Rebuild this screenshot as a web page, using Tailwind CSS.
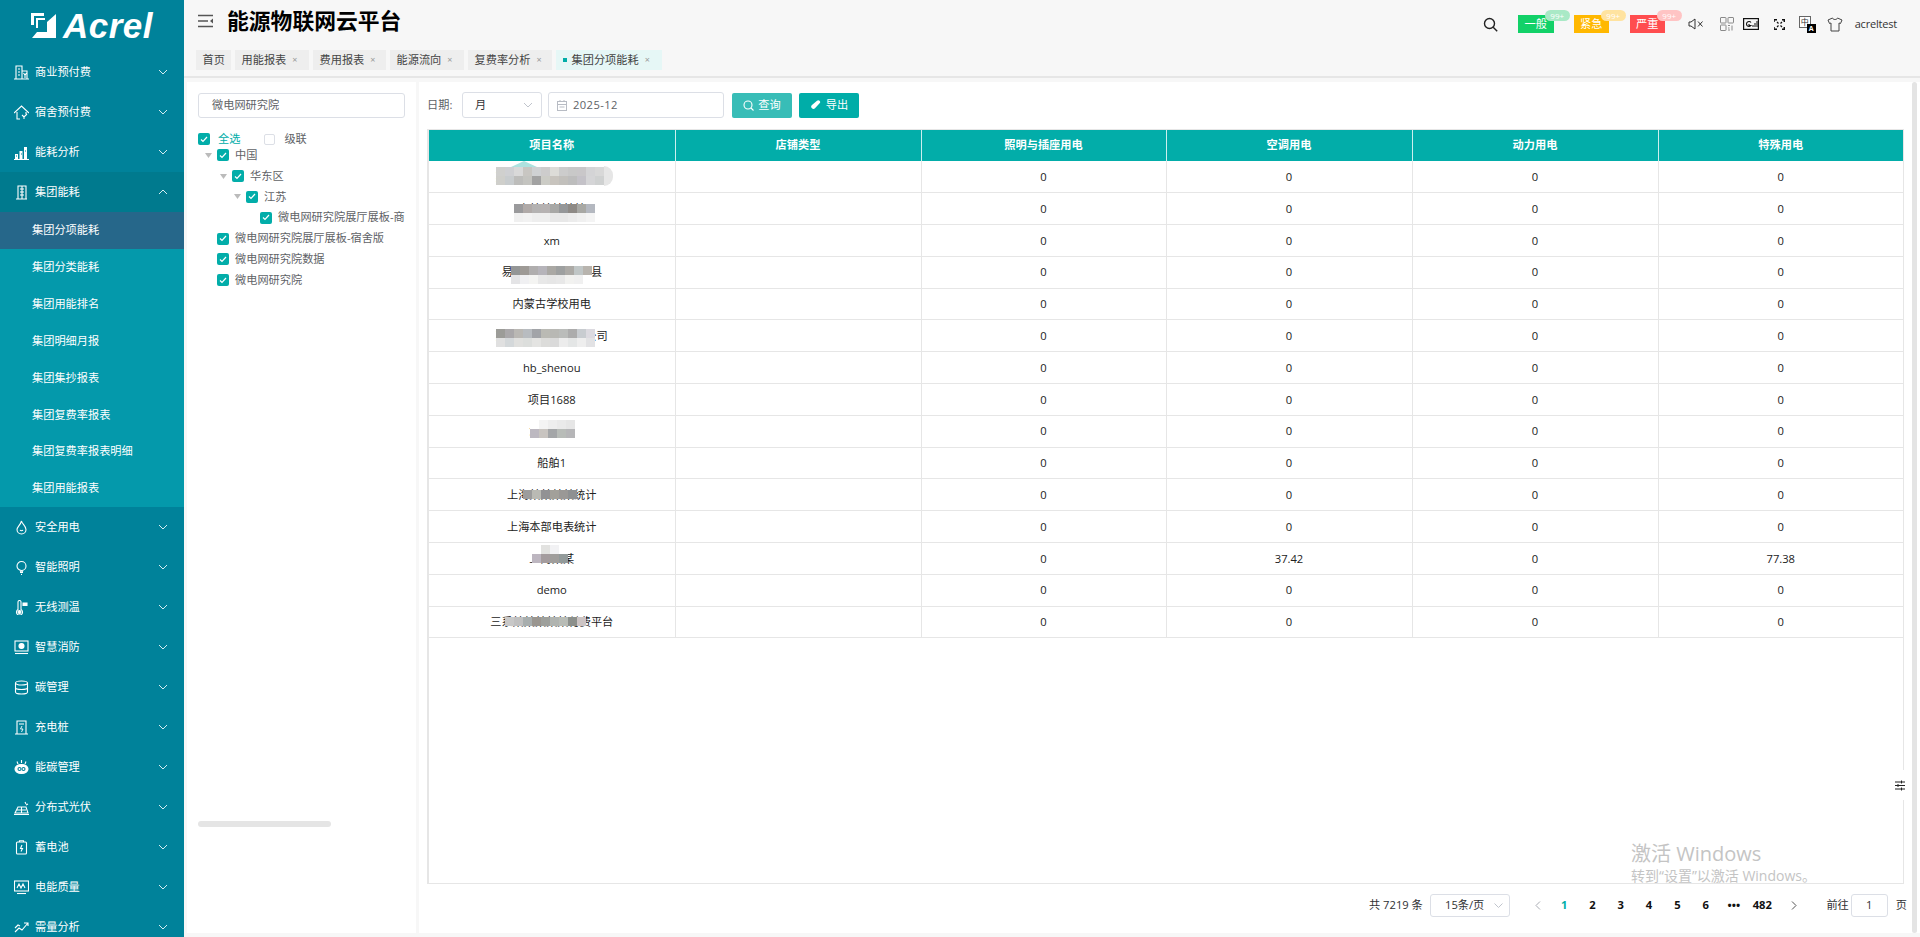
<!DOCTYPE html>
<html lang="zh"><head><meta charset="utf-8"><title>能源物联网云平台</title>
<script src="https://cdn.jsdelivr.net/npm/@tailwindcss/browser@4"></script></head>
<body class="w-[1920px] h-[937px] overflow-hidden flex bg-[#f7f7f7] text-[11.2px] text-[#303133] font-['Open_Sans','Noto_Sans_CJK_SC',sans-serif]">
<aside class="w-[184px] h-[937px] shrink-0 overflow-hidden bg-[#00829a] text-white">
  <div class="h-[52px] flex items-start pt-[12px] pl-[31px] gap-[6px]">
    <svg class="mt-[1px]" width="26" height="25" viewBox="0 0 26 25" fill="#fff"><path d="M0 0h13v3H3v9H0z"/><path d="M5 5h9v2H7v8H5z"/><path d="M25 1v24H1l5-6h10V9z"/></svg>
    <span class="text-[35px] leading-[27px] font-bold italic tracking-[.5px] font-['Liberation_Sans',sans-serif]">Acrel</span>
  </div>
  <nav id="nav"></nav>
</aside>
<div class="flex-1 min-w-0 flex flex-col">
  <header class="h-[78px] shrink-0 border-b-2 border-[#e6e6e6] relative">
    <div class="h-[50px] flex items-center pl-[14px] pr-[23px] pb-[8px]">
      <svg width="15" height="14" viewBox="0 0 15 14" fill="none" stroke="#555" stroke-width="1.3"><path d="M0 1.5h15M0 7h10M0 12.5h15"/><path d="M15 4.5 12 7l3 2.5z" fill="#555" stroke="none"/></svg>
      <h1 class="ml-[14px] text-[21.8px] font-bold text-black leading-none">能源物联网云平台</h1>
      <div class="ml-auto flex items-center h-[24px] mt-[6px]">
        <svg width="15" height="15" viewBox="0 0 15 15" fill="none" stroke="#222" stroke-width="1.4"><circle cx="6.5" cy="6.5" r="5"/><path d="m10.2 10.2 4 4"/></svg>
        <div class="relative ml-[20px] w-[36px] h-[18px] bg-[#12d168] text-white text-[11.2px] flex items-center justify-center">一般<span class="absolute left-[27px] top-[-5px] w-[25px] h-[11px] rounded-full bg-[#a9e9c6] text-[8px] leading-[11px] text-center">99+</span></div>
        <div class="relative ml-[20px] w-[35px] h-[18px] bg-[#ffb800] text-white text-[11.2px] flex items-center justify-center">紧急<span class="absolute left-[27px] top-[-5px] w-[25px] h-[11px] rounded-full bg-[#ffe3a0] text-[8px] leading-[11px] text-center">99+</span></div>
        <div class="relative ml-[21px] w-[35px] h-[18px] bg-[#ff4d4f] text-white text-[11.2px] flex items-center justify-center">严重<span class="absolute left-[27px] top-[-5px] w-[25px] h-[11px] rounded-full bg-[#ffc4c4] text-[8px] leading-[11px] text-center">99+</span></div>
        <svg class="ml-[23px]" width="15" height="12" viewBox="0 0 15 12" fill="none" stroke="#333" stroke-width="1"><path d="M1 4v4h2l4 3V1L3 4z"/><path d="m10 3.5 4.500 5M14.500 3.500l-4.500 5"/></svg>
        <svg class="ml-[17px]" width="14" height="14" viewBox="0 0 14 14" fill="none" stroke="#8a8a8a" stroke-width="1"><rect x=".5" y=".5" width="5.500" height="5.500" rx=".5"/><rect x="8" y=".5" width="5.500" height="5.500" rx=".5"/><rect x=".5" y="8" width="5.500" height="5.500" rx=".5"/><path d="M8 8.500h2M8 11h1.500M8 13h2M12 8.500v5" /></svg>
        <svg class="ml-[9px]" width="16" height="12" viewBox="0 0 16 12" fill="none" stroke="#111" stroke-width="1"><rect x=".5" y=".5" width="15" height="11" stroke="#111" stroke-width="1.400"/><path d="M8 4.500A2.500 2.500 0 1 0 8 7.500H6V6" stroke-width="1.100"/><path d="M10 9V7M12 9V5M14 9V3"/></svg>
        <svg class="ml-[15px]" width="11" height="11" viewBox="0 0 11 11" fill="none" stroke="#111" stroke-width="1.500"><path d="M0 3V.7h3M8 .7h2.300V3M0 8v2.300h3M8 10.300h2.300V8"/><path d="m3 3 1.500 1.500M8 3 6.500 4.500M3 8l1.500-1.500M8 8 6.500 6.500" stroke-width="1.200"/></svg>
        <div class="relative ml-[14px] w-[17px] h-[17px]"><div class="absolute left-0 top-0 w-[12px] h-[12px] border border-[#666] bg-white text-[8px] leading-[10px] text-center">中</div><div class="absolute right-0 bottom-0 w-[9px] h-[9px] bg-black text-white text-[7px] leading-[9px] text-center font-bold">A</div></div>
        <svg class="ml-[11px]" width="16" height="15" viewBox="0 0 16 15" fill="none" stroke="#444" stroke-width="1"><path d="M5.500 1 1 3l1.500 3.500L4 6v8h8V6l1.500.5L15 3l-4.500-2c-.5 2-4.500 2-5 0z"/></svg>
        <span class="ml-[12px] text-[11px] tracking-[-.2px] text-[#333]">acreltest</span>
      </div>
    </div>
    <div class="flex gap-[4px] pl-[12px] h-[20px]" id="tabs"></div>
  </header>
  <main class="flex-1 min-h-0 flex mt-[4px] mb-[4px] pl-[3px] gap-[3px]">
    <section class="w-[229px] shrink-0 bg-white px-[11px] pt-[11px] relative">
      <div class="w-[207px] h-[25px] border border-[#dcdfe6] rounded-[3px] pl-[13px] flex items-center text-[#606266]">微电网研究院</div>
      <div class="h-[12px] mt-[15px] flex items-center"><span class="cb"></span><span class="ml-[8px] text-[#00ada8]">全选</span><span class="ml-[24px] w-[11px] h-[11px] border border-[#dcdfe6] rounded-[2px] bg-white"></span><span class="ml-[9px] text-[#606266]">级联</span></div>
      <div id="tree" class="w-[207px] overflow-hidden"></div>
      <div class="absolute left-[11px] top-[739px] w-[133px] h-[6px] rounded-full bg-[#e5e5e5]"></div>
    </section>
    <section class="w-[1493px] shrink-0 bg-white pl-[8px] pt-[10px] relative">
      <div class="h-[26px] flex items-center">
        <span class="w-[35px] text-[#606266]">日期:</span>
        <div class="w-[80px] h-[26px] border border-[#dcdfe6] rounded-[3px] pl-[12px] pr-[8px] flex items-center justify-between"><span>月</span><svg width="10" height="6" viewBox="0 0 10 6" fill="none" stroke="#c0c4cc"><path d="m1 1 4 4 4-4"/></svg></div>
        <div class="ml-[6px] w-[176px] h-[26px] border border-[#dcdfe6] rounded-[3px] pl-[8px] flex items-center"><svg width="10" height="11" viewBox="0 0 10 11" fill="none" stroke="#b8bcc4"><rect x=".5" y="1.500" width="9" height="9"/><path d="M.5 4.500h9M3 0v2M7 0v2M2.500 7h5"/></svg><span class="ml-[6px] tracking-[.4px] text-[#606266]">2025-12</span></div>
        <button class="ml-[8px] w-[60px] h-[25px] rounded-[2px] bg-[#38bdb7] text-white flex items-center justify-center gap-[4px]"><svg width="11" height="11" viewBox="0 0 11 11" fill="none" stroke="#fff" stroke-width="1.100"><circle cx="5" cy="5" r="4"/><path d="m8 8 2.500 2.500"/></svg>查询</button>
        <button class="ml-[7px] w-[60px] h-[25px] rounded-[2px] bg-[#00ada8] text-white flex items-center justify-center gap-[5px]"><svg width="11" height="10" viewBox="0 0 11 10" fill="#fff"><path d="M7 .8a1.800 1.800 0 0 1 2.600 2.500L5 8.200a2.200 2.200 0 0 1-3.300-2.900z"/></svg>导出</button>
      </div>
      <div class="relative mt-[11px] w-[1477px] h-[755px] border border-[#e6e6e6] border-l-2 text-[#222]">
        <table class="w-[1474px] table-fixed border-collapse"><thead><tr class="h-[31px] bg-[#02ada9] text-white font-bold">
          <th class="w-[246px] border-r border-white/80 font-bold">项目名称</th><th class="w-[246px] border-r border-white/80 font-bold">店铺类型</th><th class="w-[245px] border-r border-white/80 font-bold">照明与插座用电</th><th class="w-[246px] border-r border-white/80 font-bold">空调用电</th><th class="w-[246px] border-r border-white/80 font-bold">动力用电</th><th class="font-bold">特殊用电</th></tr></thead><tbody id="rows"></tbody></table>
        <div class="absolute right-[-2px] top-[640px] w-[10px] h-[30px] bg-white flex items-center justify-center"><svg width="10" height="12" viewBox="0 0 10 12" fill="none" stroke="#222"><path d="M0 3h10M0 6.500h10M0 10h10"/><path d="M6.500 1.500v3M3 5v3M6.500 8.500v3"/></svg></div>
      </div>
      <div class="h-[43px] flex items-center text-[11.2px] relative">
        <span class="ml-[942px] w-[61px]">共 7219 条</span>
        <div class="w-[80px] h-[23px] border border-[#dcdfe6] rounded-[3px] pl-[14px] pr-[6px] flex items-center justify-between"><span>15条/页</span><svg width="9" height="5" viewBox="0 0 9 5" fill="none" stroke="#c0c4cc"><path d="m.5.500 4 4 4-4"/></svg></div>
        <svg class="ml-[25px]" width="6" height="9" viewBox="0 0 6 9" fill="none" stroke="#a8abb2"><path d="M5 .5 1 4.500l4 4"/></svg>
        <div class="ml-[9px] flex font-bold text-[#111]" id="pg"></div>
        <svg class="ml-[15px]" width="6" height="9" viewBox="0 0 6 9" fill="none" stroke="#555"><path d="m1 .5 4 4-4 4"/></svg>
        <span class="ml-[29px]">前往</span>
        <div class="ml-[2px] w-[37px] h-[23px] border border-[#dcdfe6] rounded-[3px] flex items-center justify-center">1</div>
        <span class="ml-[8px]">页</span>
      </div>
      <div class="absolute left-[1212px] top-[760px] text-[#c4c4c4] pointer-events-none">
        <div class="text-[20px] leading-[24px]">激活 Windows</div><div class="text-[14px] leading-[20px]">转到“设置”以激活 Windows。</div>
      </div>
    </section>
    <div class="flex-1 -ml-[3px] bg-white"><div class="w-[5px] h-full rounded-full bg-[#e4e4e4]"></div></div>
  </main>
</div>
<script>
const C='<svg width="10" height="6" viewBox="0 0 10 6" fill="none" stroke="#d5eef2" stroke-width="1"><path d="m1 1 4 4 4-4"/></svg>';
const U='<svg width="10" height="6" viewBox="0 0 10 6" fill="none" stroke="#d5eef2" stroke-width="1"><path d="m1 5 4-4 4 4"/></svg>';
const S=(b)=>'<svg width="15" height="15" viewBox="0 0 15 15" fill="none" stroke="#fff" stroke-width="1.100">'+b+'</svg>';
const I={
'商业预付费':'<path d="M2 14V1h6v13M8 6h5v8M0 14h15M4 4h2M4 7h2M4 10h2M9.500 8l1.500 2 1.500-2M11 10v3"/>',
'宿舍预付费':'<path d="M0 8 7.500 1 15 8M3 7v7h3M12 7v2M8 10l2 2 3-3M10 12v2"/>',
'能耗分析':'<path d="M1 14V9h3v5zM5.500 14V6h3v8zM10 14V2h3v12z" fill="#fff" stroke="none"/><path d="M0 14.500h15"/><path d="M2 11h1M7 9h1M11 6h1" stroke="#00829a"/>',
'集团能耗':'<path d="M4 14V1h8v13M2 14h11M6 4h4M6 7h4M6 10h4M8 1v13"/>',
'安全用电':'<path d="M7.500 1C8 4 12 6 12 9.500a4.500 4.500 0 0 1-9 0C3 7 6.500 5 7.500 1z"/><path d="M6 10a2 2 0 0 0 3 0"/>',
'智能照明':'<circle cx="7.500" cy="6" r="4.500"/><path d="M6 12.500h3M7 14.500h1M6 10.500l1.500 2 1.500-2"/>',
'无线测温':'<path d="M4 2a1.500 1.500 0 0 1 3 0v7.500a3 3 0 1 1-3 0z"/><circle cx="5.500" cy="12" r="1.500" fill="#fff"/><path d="M9 3h4v2.500H9z" fill="#fff"/>',
'智慧消防':'<rect x="1" y="1" width="13" height="10"/><circle cx="7.500" cy="6" r="2.500" fill="#fff"/><path d="M1 13.500h13"/>',
'碳管理':'<ellipse cx="7.500" cy="3" rx="6" ry="2"/><path d="M1.500 3v9c0 1 2.500 2 6 2s6-1 6-2V3M1.500 7.500c0 1 2.500 2 6 2s6-1 6-2"/>',
'充电桩':'<path d="M3 14V1h9v13M1 14h13M5 4h5"/><path d="M8 6 6.500 9H9l-1.500 3" stroke-width=".9"/>',
'能碳管理':'<ellipse cx="7.500" cy="9" rx="6.500" ry="4.500" fill="#fff"/><path d="M7.500 0v3M3 1.500 4 4M12 1.500 11 4" /><circle cx="5.500" cy="9" r="1.500" stroke="#00829a"/><circle cx="9.500" cy="9" r="1.500" stroke="#00829a"/>',
'分布式光伏':'<path d="M1 13h13l-2-6H4zM7.500 7v6M3 10h9M0 14.500h15M11 2l1 2M14 4l-2 1"/>',
'蓄电池':'<rect x="2.500" y="2" width="10" height="12" rx="1"/><path d="M5.500 2V.8h4V2"/><path d="M8 5 6.500 8.500h2L7 11.500"/>',
'电能质量':'<rect x=".5" y="1" width="14" height="10"/><path d="M3 8 5 4l2 4 2-4 2 4" /><path d="M3 13.500h9"/>',
'需量分析':'<path d="m1 12 4-4 3 2 6-7M10 3h4v3M1 8l3-3 2 1"/>'};
const groups=['商业预付费','宿舍预付费','能耗分析','集团能耗','安全用电','智能照明','无线测温','智慧消防','碳管理','充电桩','能碳管理','分布式光伏','蓄电池','电能质量','需量分析'];
const subs=['集团分项能耗','集团分类能耗','集团用能排名','集团明细月报','集团集抄报表','集团复费率报表','集团复费率报表明细','集团用能报表'];
let h='';
groups.forEach(g=>{const o=g==='集团能耗';
 h+='<div class="h-[40px] flex items-center pl-[14px] pr-[16px] '+(o?'bg-[#007a8e]':'')+'">'+S(I[g])+'<span class="ml-[6px] flex-1">'+g+'</span>'+(o?U:C)+'</div>';
 if(o){h+='<div class="bg-[#0499ab]">'+subs.map((s,i)=>'<div class="h-[36.9px] flex items-center pl-[32px] '+(i==0?'bg-[#26678a]':'')+'">'+s+'</div>').join('')+'</div>';}
});
document.getElementById('nav').innerHTML=h;
const tabs=[['首页',35],['用能报表',74],['费用报表',73],['能源流向',74],['复费率分析',84]];
let t=tabs.map(([n,w],i)=>'<div class="h-[20px] bg-[#eeeeee] flex items-center pl-[6.500px] gap-[6px] text-[#444]" style="width:'+w+'px">'+n+(i?'<span class="text-[#999] text-[9px]">×</span>':'')+'</div>').join('');
t+='<div class="w-[106px] h-[20px] bg-[#e6f7f6] flex items-center pl-[7px] text-[#444]"><span class="w-[3.500px] h-[3.500px] bg-[#00ada8] mr-[5px]"></span>集团分项能耗<span class="ml-[6px] text-[#999] text-[9px]">×</span></div>';
document.getElementById('tabs').innerHTML=t;
const arrow='<svg width="7" height="5" viewBox="0 0 7 5" fill="#bbb"><path d="M0 0h7L3.500 5z"/></svg>';
const cb='<span class="w-[12px] h-[12px] rounded-[2px] bg-[#02ada9] shrink-0 flex items-center justify-center"><svg width="8" height="7" viewBox="0 0 8 7" fill="none" stroke="#fff" stroke-width="1.200"><path d="m1 3.500 2 2 4-4.500"/></svg></span>';
document.querySelectorAll('.cb').forEach(e=>e.outerHTML=cb);
const tree=[['中国',19,1],['华东区',34,1],['江苏',48,1],['微电网研究院展厅展板-商',62,0],['微电网研究院展厅展板-宿舍版',19,0],['微电网研究院数据',19,0],['微电网研究院',19,0]];
document.getElementById('tree').innerHTML=tree.map(([n,x,a])=>'<div class="h-[20.800px] flex items-center whitespace-nowrap text-[#606266]" style="padding-left:'+x+'px"><span class="w-0 relative -left-[12px]">'+(a?arrow:'')+'</span>'+cb+'<span class="ml-[6px]">'+n+'</span></div>').join('');
const names=['','','xm','','内蒙古学校用电','','hb_shenou','项目1688','','船舶1','','上海本部电表统计','','demo',''];
const ghost={0:'某某某某某某有限公司',1:'房某某某某某',3:'易某某某某某某某县',5:'某某某某某某某某公司',8:'济某某某',10:'上海某某某某统计',12:'上海某某',14:'三系某某某某某付费平台'};
const M={0:[67,6,9,['#d0d0ce','#cfd0d3','#d9d9d9','#c8c6c2','#cfd1d3','#cdcccc','#dddcd8','#cccccc','#c8c8c8','#c9c7c9','#d4d4d6','#d8d8d8'],['#cfcfcb','#c8ccce','#bdbdbb','#c4c4c0','#a2a2a2','#ccccc6','#c8c4be','#c2c0bc','#bdbdbd','#c4c2c8','#d5d5d7','#cfd1d1']],
1:[85,11,9,['#9a9a9c','#b0aaa8','#b4b2b2','#b6b2b2','#a8a8a6','#959799','#8e8a86','#a8a8a4','#b4b8c0'],['#f0f0f0','#f2f2f2','#eeeeee','#eeeeee','#e8e8e8','#e8e8e8','#ececec','#f0f0f0','#f4f4f4']],
3:[82,9,9,['#949696','#9e9a96','#b0aeae','#b6b4ba','#aaa8a4','#9ea0a0','#acaaa6','#c0c6c6','#b8b4ae'],['#e4e4e6','#f0f0f2','#f4f4f2','#e8e8e8','#e6e6e6','#e8e8e8','#f2f2f0','#f0f0f0','#ffffff']],
5:[67,9,9,['#9c9c98','#aaa8aa','#bab8b4','#b8bcc0','#a2a4a8','#babab4','#b8b8b4','#babcba','#acacac','#c8ccd0','#dcdae0'],['#e0e0e0','#d4d8da','#e0e0de','#dcdedc','#e4e4e2','#dcdcda','#dadada','#ececec','#e4e6e6','#eeeeee','#e2e2e4']],
8:[101,4,9,['#ffffff','#f4f4f4','#eeeeee','#eaeaea','#e6e6e6'],['#bcb8c0','#c8c4c0','#a4a6a8','#b8bcb8','#b6b6b8']],
10:[94,11,9,['#9c9c9c','#babab4','#929294','#a2a09a','#9a9896','#8e9092']],
12:[103,2,9,['#ffffff','#e2e2e0','#f2f2f4','#ffffff'],['#bdb6c0','#a49c9e','#a09e9c','#929a9a']],
14:[76,10,9,['#c8c8c8','#c0c0c0','#a8aeae','#9a9690','#9ea09c','#b0b4b0','#b8bcb6','#8c908c','#ccc4c4']]};
const vals={12:['0','37.42','0','77.38']};
document.getElementById('rows').innerHTML=names.map((n,i)=>{
 let m='';
 if(M[i]){const [x,y,s,...r]=M[i];
  m='<div class="absolute" style="left:'+x+'px;top:'+y+'px">'+r.map(c=>'<div class="flex">'+c.map(k=>'<span class="block w-[9px] h-[9px]" style="background:'+k+'"></span>').join('')+'</div>').join('')+'</div>';
  if(i==0) m+='<div class="absolute left-[82px] top-0 w-[26px] h-[6px] bg-[#aee2df] [clip-path:polygon(50%_0,100%_100%,0_100%)]"></div><div class="absolute left-[175px] top-[5px] w-[9px] h-[20px] rounded-r-full bg-[#e6e6e6]"></div>';
 }
 const v=vals[i]||['0','0','0','0'];
 return '<tr class="h-[31.800px] border-b border-[#e6e6e6] text-center"><td class="relative pt-[1px] border-r border-[#e6e6e6]">'+(n||ghost[i])+m+'</td><td class="border-r border-[#e6e6e6]"></td>'+v.map((d,j)=>'<td class="pt-[1px] '+(j<3?'border-r border-[#e6e6e6]':'')+'">'+d+'</td>').join('')+'</tr>';
}).join('');
const pg=['1','2','3','4','5','6','•••','482'];
document.getElementById('pg').innerHTML=pg.map((p,i)=>'<span class="w-[28.300px] text-center '+(i==0?'text-[#00ada8]':'')+'">'+p+'</span>').join('');
</script>
</body></html>
